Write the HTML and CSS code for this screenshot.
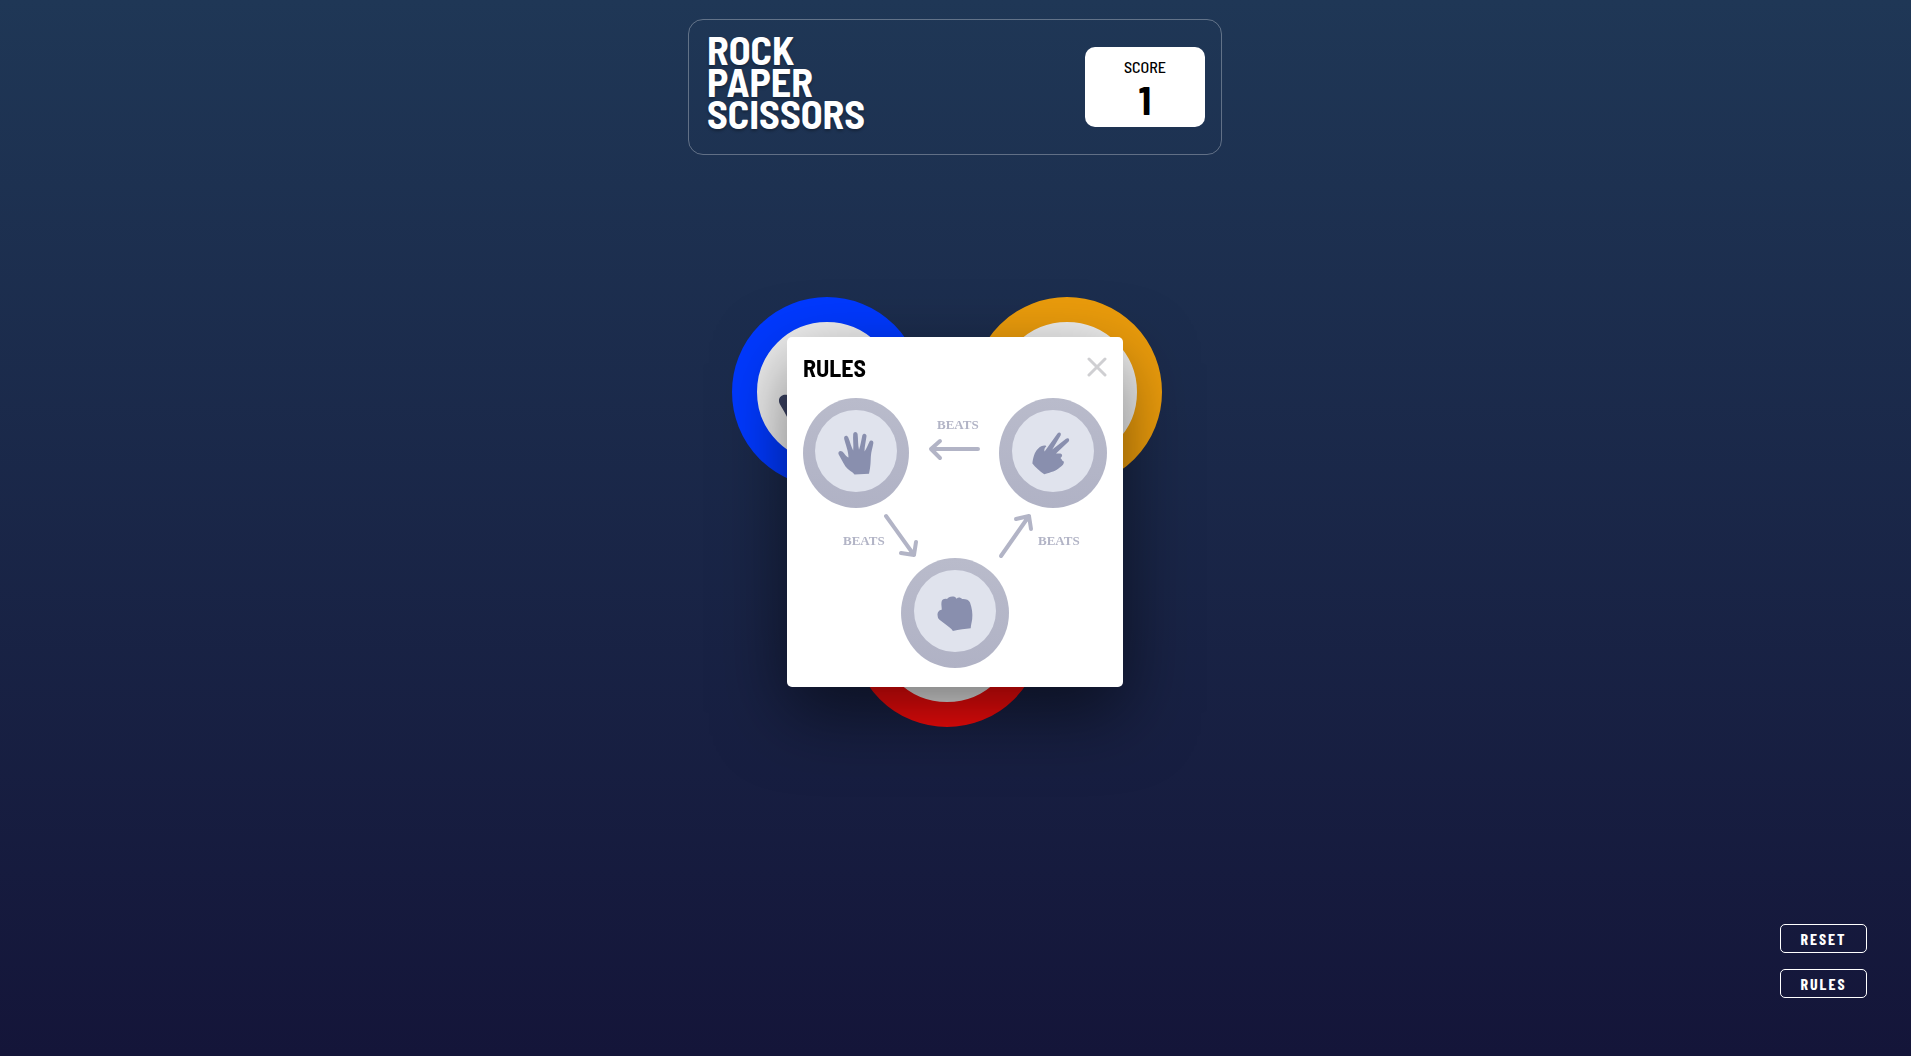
FILE: index.html
```html
<!DOCTYPE html>
<html lang="en">
<head>
<meta charset="utf-8">
<meta name="viewport" content="width=device-width, initial-scale=1">
<title>Rock Paper Scissors</title>
<link rel="stylesheet" href="styles.css">
</head>
<body>
<div class="page">
  <header class="header">
    <h1 class="title">Rock<br>Paper<br>Scissors</h1>
    <div class="score">
      <span class="score-label">Score</span>
      <span class="score-value">1</span>
    </div>
  </header>

  <main class="board">
    <button class="pick pick-paper" type="button" aria-label="Paper">
      <svg class="pick-icon" viewBox="0 -3 36 44" aria-hidden="true"><use href="#hand-paper"/></svg>
    </button>
    <button class="pick pick-scissors" type="button" aria-label="Scissors">
      <svg class="pick-icon" viewBox="0 -3 38 43" aria-hidden="true"><use href="#hand-scissors"/></svg>
    </button>
    <button class="pick pick-rock" type="button" aria-label="Rock">
      <svg class="pick-icon" viewBox="0 0 36 35" aria-hidden="true"><use href="#hand-rock"/></svg>
    </button>
  </main>

  <footer class="actions">
    <button class="action" type="button">Reset</button>
    <button class="action" type="button">Rules</button>
  </footer>
</div>

<div class="overlay">
  <section class="modal" role="dialog" aria-labelledby="rules-title">
    <div class="modal-head">
      <h2 class="modal-title" id="rules-title">Rules</h2>
      <button class="close" type="button" aria-label="Close">
        <svg width="20" height="22" viewBox="0 0 20 22" aria-hidden="true"><path d="M2 3 18 19M18 3 2 19" fill="none" stroke="#cfcfd2" stroke-width="3" stroke-linecap="round"/></svg>
      </button>
    </div>
    <svg class="diagram" viewBox="0 0 304 270" role="img" aria-label="Paper beats rock, rock beats scissors, scissors beats paper">
      <defs>
        <linearGradient id="ring" x1="0" y1="0" x2="0" y2="1">
          <stop offset="0" stop-color="#b9bbcb"/>
          <stop offset="1" stop-color="#b0b2c5"/>
        </linearGradient>
        <path id="hand-paper" d="M16.500 43.500C14.500 40.500 10.500 39.500 7.500 35.500C4.500 31 3.500 28 .7 23.500C-.6 21 2 19 4.300 20.500C6.500 22 7.500 25.500 10.500 26.500C10.500 20 7.500 13.500 6.200 8C5.500 4.500 9.200 3.800 10.300 6.500C12.300 11.500 13.200 15.500 15.200 19.500C15.700 13.500 14.700 8 15.200 3C15.600 .2 19 .2 19.600 3C20.200 8 19.800 13.500 21 18.800C22.800 13.500 23.300 9 24.300 4.500C25.200 1.800 28.800 2.500 28.500 5.300C27.900 10.500 26.500 15.500 26.500 20.500C28.500 17.500 30 14 31.300 11C32.600 8.500 36 9.500 35.300 12.500C34.500 17 33.200 20.500 32.900 25C32.500 30 33 34 31 42.700Z"/>
        <path id="hand-scissors" d="M.4 31.500C1 26 2.500 20 6 16.800C8.500 14 12 13 13.900 13.800C14.700 14.200 14 15 13.200 15.500C12.200 17 12.200 18.500 12.600 19.500L25.500 1.500C27 -.7 29.800 .8 28.600 3.400L20.300 17.600L34 6.700C36.500 5 38.300 7.700 36.400 9.700L24 21.400C26 22 27.500 21 29 21.800C31 23 30 24.800 28.500 26C29.500 27.500 30.800 28 30.300 29C30.800 29 32.300 29 31.800 31C31.200 33.500 28.500 34.500 26.500 36.500C22 40 16.500 40.700 12.300 42.300C8 39.500 3.500 35.500 .4 31.500Z"/>
        <path id="hand-rock" d="M15.800 35C15.500 33.500 13.500 32.200 12 31L3.500 24.500C1.500 23 .8 22 .6 19.500C.2 16.500 1.800 14 4.700 13.700C5 12 4 9 4.500 6C5 3 7.500 2.500 10 3C11.500 1.500 13 .2 16.500 .6C18 .8 19 1.700 19.500 2.700C21 1 23.500 1 25 3C28 2.700 32 3.500 33 6.500C35 12 35.800 17.500 35.200 23C34.700 26.500 33.900 29 33.700 32.200C28.500 33 22 33 15.800 35Z"/>
      </defs>
      <g fill="url(#ring)">
        <ellipse cx="53" cy="55" rx="53" ry="55"/>
        <ellipse cx="250" cy="55" rx="54" ry="55"/>
        <ellipse cx="152" cy="215" rx="54" ry="55"/>
      </g>
      <g fill="#e0e3ed">
        <circle cx="53" cy="53" r="41"/>
        <circle cx="250" cy="53" r="41"/>
        <circle cx="152" cy="213" r="41"/>
      </g>
      <g fill="#898fae">
        <use href="#hand-paper" x="35" y="33"/>
        <use href="#hand-scissors" x="229" y="34"/>
        <use href="#hand-rock" x="134" y="198"/>
      </g>
      <g fill="none" stroke="#b2b4c6" stroke-width="4" stroke-linecap="round" stroke-linejoin="round">
        <path d="M175 51H128M137 43L128 51L137 60"/>
        <path d="M83 118L111 157M98 155L111 157L113 144"/>
        <path d="M198 158L226 118M213 121L226 118L228 131"/>
      </g>
      <g class="beats">
        <text x="134" y="31">BEATS</text>
        <text x="40" y="147">BEATS</text>
        <text x="235" y="147">BEATS</text>
      </g>
    </svg>
  </section>
</div>
</body>
</html>
```
FILE: styles.css
```css
* {
  box-sizing: border-box;
}

body {
  margin: 0;
  font-family: "Barlow Semi Condensed", "Liberation Sans Narrow", "Liberation Sans", sans-serif;
  background: #141539;
}

h1,
h2 {
  margin: 0;
}

button {
  font-family: inherit;
  cursor: pointer;
}

.page {
  display: flex;
  flex-direction: column;
  align-items: center;
  min-height: 100vh;
  padding: 19px 17px 58px 16px;
  background: linear-gradient(#1f3756, #141539);
}

.header {
  display: flex;
  justify-content: space-between;
  align-items: flex-start;
  width: 100%;
  max-width: 534px;
  padding: 13px 16px 25px 18px;
  border: 1px solid rgba(255, 255, 255, 0.3);
  border-radius: 15px;
}

.title {
  color: #fff;
  font-size: 40px;
  line-height: 32px;
  text-transform: uppercase;
  text-shadow: 0 2px 3px rgba(0, 0, 0, 0.3);
}

.score {
  display: flex;
  flex-direction: column;
  align-items: center;
  width: 120px;
  height: 80px;
  margin-top: 14px;
  padding-top: 10px;
  border-radius: 10px;
  background: #fff;
  color: #000;
}

.score-label {
  font-size: 16px;
  font-weight: 500;
  line-height: 20px;
  text-transform: uppercase;
}

.score-value {
  font-size: 40px;
  font-weight: 700;
  line-height: 44px;
}

.board {
  display: grid;
  grid-template-columns: repeat(2, 190px);
  gap: 50px;
  margin: 142px 16px 0 0;
}

.pick {
  display: grid;
  place-items: center;
  width: 190px;
  height: 190px;
  padding: 0;
  border: 25px solid;
  border-radius: 50%;
  background: #ededed;
}

.pick-paper {
  border-color: #0039ff;
}

.pick-scissors {
  border-color: #eb9c0c;
}

.pick-rock {
  grid-column: 1 / -1;
  justify-self: center;
  border-color: #f40b0b;
}

.pick-icon {
  width: 98px;
  height: 120px;
  fill: #3b4262;
}

.actions {
  display: flex;
  flex-direction: column;
  align-self: flex-end;
  gap: 16px;
  margin: auto 27px 0 0;
}

.action {
  width: 87px;
  height: 29px;
  padding: 0;
  border: 1px solid #fff;
  border-radius: 5px;
  background: transparent;
  color: #fff;
  font-family: "Barlow Condensed", "Barlow Semi Condensed", sans-serif;
  font-size: 16px;
  font-weight: 700;
  letter-spacing: 2px;
  text-transform: uppercase;
}

.overlay {
  position: fixed;
  inset: 0;
  display: grid;
  place-items: center;
  padding: 0 1px 32px 0;
  pointer-events: none;
}

.modal {
  width: 336px;
  padding: 16px 16px 19px;
  border-radius: 5px;
  background: #fff;
  box-shadow: 0 26px 70px rgba(0, 0, 0, 0.5);
  pointer-events: auto;
}

.modal-head {
  display: flex;
  justify-content: space-between;
  align-items: flex-start;
  height: 45px;
  padding-top: 3px;
}

.modal-title {
  color: #000;
  font-size: 24px;
  line-height: 24px;
  text-transform: uppercase;
}

.close {
  padding: 0;
  border: 0;
  background: none;
  line-height: 0;
}

.diagram {
  display: block;
  width: 100%;
}

.beats {
  fill: #b2b4c6;
  font-family: "Liberation Serif", serif;
  font-size: 13px;
  font-weight: 700;
}
```
